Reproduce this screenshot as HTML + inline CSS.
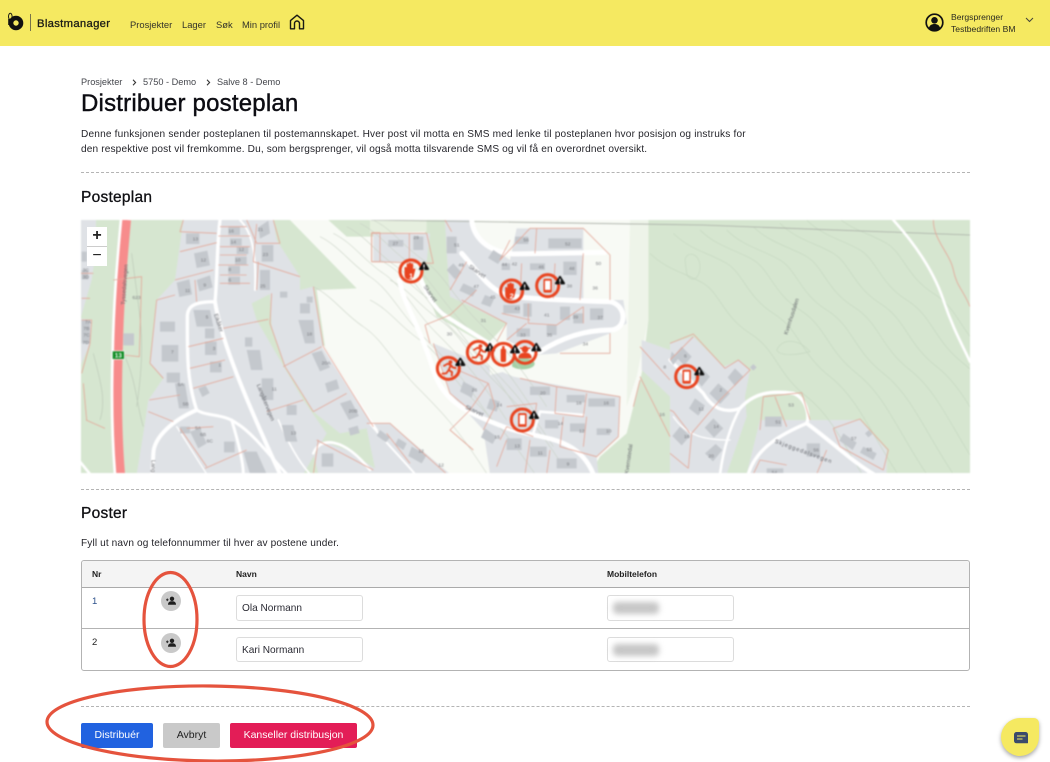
<!DOCTYPE html>
<html lang="no">
<head>
<meta charset="utf-8">
<title>Distribuer posteplan</title>
<style>
html,body{margin:0;padding:0;background:#fff}
body{width:1050px;height:762px;overflow:hidden;position:relative;font-family:"Liberation Sans",sans-serif;color:#1a1a1a}
.t{position:absolute;white-space:nowrap;line-height:1}
header{position:absolute;left:0;top:0;width:1050px;height:45.5px;background:#f5e961}
.nav{font-size:9.4px;top:19.5px;color:#33332a}
.bc{font-size:9.2px;top:78px;color:#44464c}
.dash{position:absolute;left:81px;width:889px;height:0;border-top:1px dashed #b4b4b4}
h1,h2{margin:0;font-weight:400}
h1{font-size:24px;left:81px;top:92px;color:#0c0c12;-webkit-text-stroke:.4px #0c0c12;letter-spacing:.2px}
h2{font-size:15.5px;color:#101014;-webkit-text-stroke:.3px #101014;letter-spacing:.25px}
.p{font-size:10.1px;left:81px;color:#24242a}
.tbl{position:absolute;left:81px;top:560px;width:887px;height:109px;border:1px solid #b3b3b3;border-radius:3px}
.th{position:absolute;left:0;top:0;width:887px;height:26px;background:#f4f4f4;border-bottom:1px solid #aaa;border-radius:3px 3px 0 0}
.rl{position:absolute;left:0;top:67px;width:887px;border-top:1px solid #b3b3b3}
.h{font-size:8.5px;font-weight:700;top:570px;color:#222}
.in{position:absolute;width:125px;box-sizing:content-box;border:1px solid #dcdcdc;border-radius:3px;background:#fff;font-size:10.1px;color:#2a2a33}
.in span{position:absolute;left:5px;top:8px;line-height:1}
.blob{position:absolute;left:5px;top:6px;width:46px;height:12px;background:#c6c6c6;filter:blur(3px);border-radius:4px}
.av{position:absolute;left:161px;width:20px;height:20px;border-radius:50%;background:#c9c9c9}
.btn{position:absolute;top:723px;height:25px;border-radius:2px;font-size:10.5px;line-height:24px;text-align:center;white-space:nowrap}
.chat{position:absolute;left:1001px;top:718px;width:38px;height:38px;background:#f5e961;border-radius:50% 5px 50% 50%;box-shadow:0 2px 4px rgba(0,0,0,.35)}
.map{position:absolute;left:81px;top:220px;width:889px;height:253px;filter:blur(.7px)}
.zc{position:absolute;left:87px;width:20px;height:19px;text-align:center;font-size:16px;line-height:18px;color:#222}
.over{position:absolute;left:0;top:0;pointer-events:none}
</style>
</head>
<body>
<header>
<svg style="position:absolute;left:7px;top:12px" width="18" height="20" viewBox="0 0 18 20">
<ellipse cx="3.300" cy="4.500" rx="1.800" ry="3.200" fill="none" stroke="#1a1a12" stroke-width="1"/>
<path d="M3 7v6" stroke="#111" stroke-width="3.600"/>
<circle cx="9" cy="11" r="5" fill="none" stroke="#111" stroke-width="4.600"/>
</svg>
<div style="position:absolute;left:30px;top:14px;width:1px;height:17px;background:#77734a"></div>
<div class="t" style="left:37px;top:18.5px;font-size:11.3px;color:#1c1c16;-webkit-text-stroke:.3px #1c1c16;letter-spacing:.3px">Blastmanager</div>
<div class="t nav" style="left:130px">Prosjekter</div>
<div class="t nav" style="left:182px">Lager</div>
<div class="t nav" style="left:216px">Søk</div>
<div class="t nav" style="left:242px">Min profil</div>
<svg style="position:absolute;left:289px;top:14px" width="16" height="16" viewBox="0 0 16 16"><path d="M1.5 14.8V6.6L8 1.2l6.5 5.4v8.2H10.500V9.500a2.500 2.500 0 0 0-5 0v5.300z" fill="none" stroke="#1a1a14" stroke-width="1.400" stroke-linejoin="round"/></svg>
<svg style="position:absolute;left:925px;top:13px" width="19" height="19" viewBox="0 0 19 19"><circle cx="9.500" cy="9.500" r="8.300" fill="none" stroke="#111" stroke-width="1.700"/><circle cx="9.500" cy="7.300" r="3.300" fill="#111"/><path d="M3.800 15c1-3 3-4 5.700-4s4.700 1 5.700 4a8 8 0 0 1-11.400 0z" fill="#111"/></svg>
<div class="t" style="left:951px;top:13px;font-size:8.600px;color:#2a2a20">Bergsprenger</div>
<div class="t" style="left:951px;top:24.500px;font-size:8.600px;color:#2a2a20">Testbedriften BM</div>
<svg style="position:absolute;left:1025px;top:17px" width="9" height="6" viewBox="0 0 9 6"><path d="M1 1l3.500 3.500L8 1" fill="none" stroke="#44443a" stroke-width="1"/></svg>
</header>

<div class="t bc" style="left:81px">Prosjekter</div>
<svg style="position:absolute;left:132px;top:79px" width="5" height="7" viewBox="0 0 5 7"><path d="M1 .8l2.600 2.700L1 6.200" fill="none" stroke="#333" stroke-width="1.100"/></svg>
<div class="t bc" style="left:143px">5750 - Demo</div>
<svg style="position:absolute;left:206px;top:79px" width="5" height="7" viewBox="0 0 5 7"><path d="M1 .8l2.600 2.700L1 6.200" fill="none" stroke="#333" stroke-width="1.100"/></svg>
<div class="t bc" style="left:217px">Salve 8 - Demo</div>

<h1 class="t">Distribuer posteplan</h1>
<div class="t p" style="top:130px;letter-spacing:.185px">Denne funksjonen sender posteplanen til postemannskapet. Hver post vil motta en SMS med lenke til posteplanen hvor posisjon og instruks for</div>
<div class="t p" style="top:145px;letter-spacing:.145px">den respektive post vil fremkomme. Du, som bergsprenger, vil også motta tilsvarende SMS og vil få en overordnet oversikt.</div>
<div class="dash" style="top:172px"></div>
<h2 class="t" style="left:81px;top:190px">Posteplan</h2>

<div class="map">
<svg width="889" height="253" viewBox="0 0 889 253" style="display:block">
<defs>
<g id="warn" transform="translate(0,3) scale(1.400)"><path d="M0-13c1.500 0 2 1 3 3l7 11c1.500 2.500.5 4-2 4H-8c-2.500 0-3.500-1.500-2-4l7-11c1-2 1.500-3 3-3z" fill="#0d0d0d"/><path d="M0-7V0" stroke="#fff" stroke-width="2.600"/><circle cy="3" r="1.300" fill="#fff"/></g>
<g id="ring"><circle r="33" fill="none" stroke="#e8431f" stroke-width="9"/></g>
<g id="hand" transform="scale(1.300)"><path d="M-15-7c0-3 5-3 5 0v-8c0-3 5-3 5 0v-2c0-3 5-3 5 0v2c0-3 5-3 5 0V-4c2-3 6-2 5 1l-3 12c-2 9-6 11-11 11s-11-3-11-12z" fill="#e8431f"/></g>
<g id="phone" transform="scale(1.150)"><rect x="-11" y="-18" width="22" height="36" rx="3" fill="#e8431f"/><rect x="-7" y="-13" width="14" height="24" fill="#fff"/></g>
<g id="run" transform="scale(1.250)"><circle cx="5" cy="-15" r="4.500" fill="#e8431f"/><path d="M-12-5L-2-11 6-8 1 4 9 9 8 19M1 4l-6 8-11 1M6-8l5 6 8 1" fill="none" stroke="#e8431f" stroke-width="4.500" stroke-linejoin="round"/></g>
<path id="cont" d="M0,0C60,30 90,80 150,120S240,230 310,300 430,420 520,560" fill="none" stroke="#c8d1c4" stroke-width="1.600"/>
<path id="cont2" d="M0,0C50,50 110,60 160,90S220,190 300,240 380,360 470,430 600,620 700,762" fill="none" stroke="#c4d6bf" stroke-width="1.800"/>
</defs>

<rect width="889" height="253" fill="#d6e6d0"/>

<!-- open white terrain -->
<g transform="translate(289,0) scale(.33333)">
<polygon fill="#f8faf5" points="-240,0 835,0 835,300 815,460 770,640 690,710 660,762 240,762 60,660 30,640 -135,380 -160,210 -40,205"/>
<polygon fill="#d6e6d0" points="170,0 225,0 240,190 410,310 350,375 200,290 150,170"/>
<polygon fill="#d6e6d0" points="-125,0 -70,50 30,50 170,15 170,0"/>
<polygon fill="#e6efdf" points="0,0 170,0 170,35 0,40"/>
<polygon fill="#eef4e9" points="780,0 835,0 835,300 800,470 770,560"/>
</g>

<!-- residential grey -->
<g fill="#dfe2e6">
<g transform="translate(-1,0) scale(.33333)">
<polygon points="0,0 48,0 48,90 35,180 0,300"/>
<polygon points="0,295 35,300 30,370 0,440"/>
<polygon points="310,0 580,0 590,60 660,170 660,210 700,200 730,380 900,640 900,762 170,762 190,640 205,540 250,475 210,430 230,240 285,180"/>
</g>
<g transform="translate(289,0) scale(.33333)">
<polygon points="225,0 300,0 330,60 420,120 440,25 640,25 640,240 760,240 770,310 720,340 560,400 500,405 410,360 410,310 240,230 230,100"/>
<polygon points="10,40 180,40 170,125 10,125"/>
<polygon points="190,370 360,440 430,470 750,530 745,650 680,710 685,762 360,762 340,630 240,520"/>
<polygon points="-10,610 60,610 240,762 -10,762"/>
<polygon points="815,360 900,390 900,530 815,450"/>
</g>
<g transform="translate(589,0) scale(.33333)">
<polygon points="0,370 70,350 160,440 210,420 240,450 225,530 230,590 170,762 0,762"/>
<polygon points="270,600 570,600 650,690 650,762 230,762"/>
</g>
</g>
<g transform="translate(-1,0) scale(.33333)">
<polygon fill="#d6e6d0" points="515,250 570,222 575,320 615,440 700,575 780,640 860,625 885,745 800,690 730,665 700,700 715,762 670,762 740,640 670,540 530,300"/>
</g>
<g transform="translate(289,0) scale(.33333)"><ellipse cx="458" cy="431" rx="36" ry="17" fill="#a4d0a5"/><path d="M355,400L430,395 425,450 360,465z" fill="#f8faf5"/></g>

<!-- contours -->
<g transform="translate(-1,0) scale(.33333)">
<use href="#cont" x="720" y="50"/><use href="#cont" x="760" y="40"/><use href="#cont" x="800" y="20"/><use href="#cont" x="840" y="10"/><use href="#cont" x="880" y="0"/>
<use href="#cont" x="900" y="120"/><use href="#cont" x="930" y="180"/><use href="#cont" x="870" y="240"/><use href="#cont" x="700" y="200"/>
<path d="M130,400C170,480 170,560 190,620M40,400C60,480 80,540 60,600M155,100C180,300 200,360 170,560" fill="none" stroke="#bcc9b8" stroke-width="2"/>
</g>
<g transform="translate(589,0) scale(.33333)">
<use href="#cont2" x="90" y="30"/><use href="#cont2" x="170" y="30"/><use href="#cont2" x="250" y="20"/><use href="#cont2" x="330" y="10"/><use href="#cont2" x="410" y="0"/><use href="#cont2" x="10" y="40"/><use href="#cont2" x="490" y="-20"/><use href="#cont2" x="-60" y="100"/>
<path d="M45,120C50,90 90,100 90,140S60,190 50,160zM320,390C340,350 390,360 420,395 380,405 330,410 320,390z" fill="none" stroke="#c4d6bf" stroke-width="1.800"/>
</g>
<path d="M290,0L620,5 889,15" fill="none" stroke="#a9aea6" stroke-width=".8"/>

<!-- roads -->
<g fill="none" stroke-linecap="round" stroke-linejoin="round" stroke="#fff">
<g transform="translate(-1,0) scale(.33333)">
<path d="M135,0C123,130 113,250 110,400C107,500 107,640 117,762" stroke-width="32"/>
<path d="M140,0C128,130 118,250 115,400C112,500 112,640 122,762" stroke="#f78c8c" stroke-width="26" stroke-linecap="butt"/>
<path d="M420,0C410,80 412,180 405,245C350,245 322,255 322,290C322,400 320,480 350,570" stroke-width="10"/>
<path d="M405,245C420,340 470,480 600,762" stroke-width="12"/>
<path d="M480,0C510,30 530,80 525,210" stroke-width="6"/>
<path d="M350,570C380,590 430,580 470,610C520,640 580,720 620,762" stroke-width="9"/>
<path d="M350,570C280,600 222,650 220,700L217,762" stroke-width="12"/>
<path d="M290,620C310,650 340,700 380,762" stroke-width="4"/>
<path d="M455,600C470,650 490,720 490,762" stroke-width="9"/>
<path d="M730,380L890,630" stroke-width="7"/>
<path d="M700,700C720,650 790,650 870,750" stroke-width="8"/>
<path d="M595,600C630,680 660,730 690,762" stroke-width="5"/>
<path d="M0,725L30,762" stroke-width="8"/>
</g>
<g transform="translate(289,0) scale(.33333)">
<path d="M305,0C310,50 350,95 430,102L705,97" stroke-width="15"/>
<path d="M275,100C320,150 350,200 400,222C430,235 560,240 720,245C772,255 772,330 720,330C650,330 580,350 510,395L430,400" stroke-width="15"/>
<path d="M150,170C170,220 190,265 230,290L360,372 490,395" stroke-width="12"/>
<path d="M88,180C100,250 150,320 190,450C220,550 300,580 400,620C500,660 620,640 670,762" stroke-width="14"/>
<path d="M490,640L510,575 640,585" stroke-width="8"/>
<path d="M0,610C40,660 100,720 135,762" stroke-width="6"/>
</g>
<g transform="translate(589,0) scale(.33333)">
<path d="M670,0C760,100 800,180 820,240C850,330 880,380 900,425" stroke-width="8"/>
<path d="M0,420L100,520C130,570 170,580 210,565C250,520 300,510 370,520C410,535 420,590 410,610C340,640 260,680 235,762" stroke-width="10"/>
<path d="M410,610C480,660 540,720 610,762" stroke-width="12"/>
<path d="M210,565C180,620 160,690 150,762" stroke-width="8"/>
<path d="M10,590C50,650 110,660 180,660" stroke-width="4"/>
</g>
</g>

<!-- buildings -->
<g fill="#c4c8cd">
<g transform="translate(-1,0) scale(.33333)">
<path d="M318,40h40v32h-40zM342,100l40-8 8,44-40 8zM290,188l38-10 8,45-38 8zM350,180l40-14 8,36-40 12zM445,20h35v25h-35zM450,55h35v22h-35zM470,80h35v22h-35zM465,110h35v24h-35zM445,138h35v24h-35zM445,170h35v24h-35zM535,22l30-20 5,38-30 16zM545,75h35v50h-35zM540,150h30v60h-30zM240,305h45v30h-45zM340,270h50l10,50h-50zM375,325h28v30h-28zM245,375h50v50h-50zM375,365h35v40h-35zM390,425h35v32h-35zM260,458h40v30h-40zM285,490h30l12,75h-30zM355,505l22-8 12,22-22 12zM500,390h40l8,60h-35zM495,352h22v28h-22zM545,475h35v65h-35zM620,555h30v30h-30zM605,615h35l12,50h-35zM432,665h32v32h-32zM490,695h40l30,67h-50zM660,250h30v30h-30zM655,300h45l5,70h-30zM695,400l30-8 25,50-30 12zM735,490l35-12 8,28-35 12zM780,550l32-10 25,48-30 12zM805,625l28-8 6,22-28 8zM725,700h35v40h-35zM600,215h22v18h-22zM680,230h18v18h-18zM130,340h32v36h-32zM5,95h15v30H5zM5,150h20v28H5zM5,300h25v70H5z"/>
<path d="M300,620h30v20h-30zM330,635l30-10 20,45-25 15z"/>
</g>
<g transform="translate(289,0) scale(.33333)">
<path d="M55,60h45v20H55zM130,50h30v40h-30zM230,50h30v50h-30zM250,130l25,28-20 20-25-28zM280,190l40 18-12 22-40-18zM345,225l28 10-12 26-28-10zM370,90l30 20-16 22-30-18zM395,130h25v20h-25zM435,50h40v22h-40zM535,55h100v30H535zM480,130h45v20h-45zM580,125h40v40h-40zM520,190h25v22h-25zM400,255h50v25h-50zM460,250h25v40h-25zM570,260h30v40h-30zM610,280h30v30h-30zM660,265h40v35h-40zM440,325h40v25h-40zM530,315h30v30h-30zM280,485l35 18-10 30-35-18zM360,535l30 10-10 30-30-10zM480,500h60v25h-60zM590,525h55v22h-55zM655,535h80v25h-80zM525,600h40v25h-40zM600,610h45v25h-45zM680,625h40v20h-40zM345,625l35 25-12 22-35-20zM410,655h45v35h-45zM480,680h50v30h-50zM560,715h60v30h-60zM30,630l30 22-12 15-28-20zM85,655l25 15-10 20-25-16zM125,680l45 25-15 25-40-22z"/>
</g>
<g transform="translate(589,0) scale(.33333)">
<path d="M35,380l30 30-22 26-30-30zM5,395l20 20-15 20-10-15zM95,445l25 25-25 30-22-28zM195,445l25 25-25 28-22-26zM250,432l10 10-10 10-10-10zM145,490l35 30-30 32-32-32zM75,535l30 22-20 30-28-22zM130,595l30 30-28 28-28-30zM30,620l30 28-25 28-28-28zM105,700l32-28 20 18-28 34zM285,590h50v30h-50zM410,670h40v40h-40zM520,640l40 28-12 22-40-28zM580,680l40 20-10 20-40-22zM585,640l12-10 10 12-12 10zM290,745h50v17h-50z"/>
</g>
</g>

<!-- parcels -->
<g fill="none" stroke="#e3a899" stroke-width="2.500" stroke-linejoin="round">
<g transform="translate(-1,0) scale(.33333)">
<path d="M310,0L300,35 410,40M300,95L410,68M285,180L400,150M230,240L285,225M350,245L345,180M420,20h80M415,48h95M420,80h90M420,105h80M415,135h90M420,165h80M420,190h90M530,12L520,125 660,170M535,125L530,210M500,0L530,70 600,70 580,0M210,430L230,240M325,380L430,355M330,445L435,420M340,505L460,470M208,540L300,525M205,575L280,605M430,325L565,298M575,220L570,310 615,440 700,575M610,440L725,380M700,200L730,380 880,620M700,575L800,520M560,575L670,540M210,430L250,475M375,745L500,690M300,625L380,740M320,625L400,620M710,660L880,750M715,660L700,762M875,38H900V125H875zM0,160H40M5,235H30M5,300L35,300 30,370 5,460M18,600L75,625M100,180L185,170 178,410 130,405M10,490L20,600"/>
</g>
<g transform="translate(289,0) scale(.33333)">
<path d="M5,40H170L190,130 5,125zM118,40V125M245,35L225,0M240,210L290,125M320,210L240,285 165,315M275,240L410,310 380,365M165,315L180,370M420,60L390,120 480,25 640,25 720,105 720,240M500,25L495,100M640,100L630,240M455,130L450,235M555,130L550,235M395,280L480,300M475,250L475,310 560,315 640,260M640,260L640,310M570,400L720,400 720,340M470,310L410,360M190,370L240,520 300,570 240,630 310,690M240,440L355,490 300,570M355,490L375,560 340,630M450,475L560,500 555,580 640,590 650,520M560,500L750,530 745,650 680,710 570,680 580,590M410,560L500,550 490,620M390,660L410,620 490,650M380,740L410,660M480,660L465,762M540,690L530,762M650,590L640,680M-10,610L60,610 230,762M50,640L120,730M810,380L900,480M810,470L900,650M810,480L790,560"/>
</g>
<g transform="translate(589,0) scale(.33333)">
<path d="M0,370L70,342 165,445 205,420 240,450 150,540 65,640 55,745M0,570L10,575 60,640M70,350L0,420M280,530L395,518 420,600M280,530L270,630M315,530L350,620M490,625L570,597 655,690 640,750M490,625L510,680 640,750M470,690L440,762M270,720L350,735M0,700L55,745M790,0C790,60 840,100 850,150S880,210 900,260M250,762L270,720"/>
</g>
</g>

<!-- labels -->
<g fill="#7a7c80" font-family="Liberation Sans,sans-serif" font-size="15">
<g transform="translate(-1,0) scale(.33333)">
<text x="338" y="62">13</text><text x="362" y="125">12</text><text x="445" y="38">16</text><text x="452" y="70">14</text><text x="476" y="93">12</text><text x="465" y="125">10</text><text x="445" y="153">8</text><text x="445" y="185">6</text><text x="533" y="33">21</text><text x="548" y="108">23</text><text x="540" y="202">25</text><text x="315" y="216">11</text><text x="370" y="200">9</text><text x="157" y="237">623</text><text x="377" y="296">5</text><text x="273" y="400">7</text><text x="398" y="390">3</text><text x="415" y="440">1</text><text x="293" y="498">5A</text><text x="308" y="556">5B</text><text x="345" y="628">5A</text><text x="360" y="648">6B</text><text x="380" y="668">6C</text><text x="575" y="512">11</text><text x="632" y="644">13</text><text x="680" y="346">18</text><text x="725" y="433">20A</text><text x="806" y="577">20B</text><text x="8" y="175">3D</text><text x="8" y="155">3C</text><text x="15" y="310">7A</text><text x="10" y="330">7B</text><text x="10" y="350">7C</text><text x="8" y="372">7D</text>
<g font-size="17" fill="#62646a">
<text transform="translate(135,255) rotate(-86)">Tyssedalsvegen</text>
<text transform="translate(402,283) rotate(72)">Eikåker</text>
<text transform="translate(530,495) rotate(68)">Langåkervegen</text>
<text transform="translate(214,720) rotate(90)">Lang</text>
</g>
</g>
<g transform="translate(289,0) scale(.33333)">
<text x="68" y="75">27</text><text x="130" y="57">29</text><text x="252" y="80">51</text><text x="265" y="140">49</text><text x="310" y="204">47</text><text x="395" y="138">44</text><text x="425" y="137">42</text><text x="460" y="65">56</text><text x="585" y="77">52</text><text x="505" y="145">46</text><text x="597" y="150">48</text><text x="590" y="202">38</text><text x="677" y="135">50</text><text x="667" y="208">36</text><text x="360" y="235">45</text><text x="433" y="270">43</text><text x="522" y="290">41</text><text x="608" y="295">39</text><text x="682" y="297">37</text><text x="332" y="306">31</text><text x="230" y="347">30</text><text x="450" y="350">33</text><text x="530" y="350">35</text><text x="638" y="376">34</text><text x="305" y="515">26</text><text x="380" y="560">24</text><text x="510" y="524">20</text><text x="618" y="553">18</text><text x="700" y="553">16</text><text x="563" y="615">14</text><text x="627" y="638">12</text><text x="708" y="638">10</text><text x="373" y="655">15</text><text x="433" y="683">13</text><text x="503" y="703">11</text><text x="590" y="736">9</text><text x="145" y="697">12</text><text x="205" y="740">12</text><text x="880" y="445">8</text><text x="868" y="588">16</text>
<g font-size="17" fill="#62646a">
<text transform="translate(295,142) rotate(35)">Skarvet</text>
<text transform="translate(160,200) rotate(55)">Skarvet</text>
<text transform="translate(285,565) rotate(25)">Skarvet</text>
<text transform="translate(775,762) rotate(-82)">Kvernstedal</text>
</g>
</g>
<g transform="translate(589,0) scale(.33333)">
<text x="42" y="412">6</text><text x="148" y="514">2</text><text x="85" y="572">12</text><text x="130" y="624">14</text><text x="42" y="654">16</text><text x="115" y="712">20</text><text x="355" y="560">53</text><text x="316" y="610">51</text><text x="430" y="695">56</text><text x="543" y="660">57</text><text x="590" y="693">55</text><text x="305" y="762">54</text>
<g font-size="17" fill="#62646a">
<text transform="translate(352,345) rotate(-72)">Kvernhusdalen</text>
<text transform="translate(313,668) rotate(20)" textLength="180">Skjeggedalsvegen</text>
</g>
</g>
</g>
<g transform="translate(-1,0) scale(.33333)">
<rect x="97" y="393" width="36" height="25" fill="#0b8a1f" stroke="#fff" stroke-width="2"/>
<text x="115" y="412" font-family="Liberation Sans,sans-serif" font-size="19" font-weight="700" fill="#fff" text-anchor="middle">13</text>
</g>

<!-- markers -->
<g transform="translate(289,0) scale(.33333)" font-family="Liberation Sans,sans-serif">
<g transform="translate(123,153)"><use href="#ring"/><use href="#hand"/><text y="22" text-anchor="middle" font-size="22" font-weight="700" fill="#fff">1</text></g>
<use href="#warn" x="162" y="140"/>
<g transform="translate(425,213)"><use href="#ring"/><use href="#hand"/><text y="22" text-anchor="middle" font-size="22" font-weight="700" fill="#fff">2</text></g>
<use href="#warn" x="464" y="200"/>
<g transform="translate(533,197)"><use href="#ring"/><use href="#phone"/></g>
<use href="#warn" x="570" y="183"/>
<g transform="translate(325,397)"><use href="#ring"/><use href="#run"/></g>
<use href="#warn" x="360" y="384"/>
<g transform="translate(465,397)"><use href="#ring"/><circle cy="-9" r="10" fill="#e8431f"/><path d="M-17-14h34l-3 4H-14z" fill="#e8431f"/><path d="M-20 18c0-13 9-17 20-17s20 4 20 17z" fill="#e8431f"/></g>
<use href="#warn" x="499" y="384"/>
<g transform="translate(400,403)"><use href="#ring"/><rect x="-8" y="-17" width="16" height="40" rx="5" fill="#e8431f"/><rect x="-3.500" y="-25" width="7" height="9" fill="#e8431f"/></g>
<use href="#warn" x="435" y="390"/>
<g transform="translate(235,445)"><use href="#ring"/><use href="#run"/></g>
<use href="#warn" x="271" y="428"/>
<g transform="translate(457,600)"><use href="#ring"/><use href="#phone"/></g>
<use href="#warn" x="492" y="587"/>
</g>
<g transform="translate(589,0) scale(.33333)">
<g transform="translate(50,470)"><use href="#ring"/><use href="#phone"/></g>
<use href="#warn" x="88" y="456"/>
</g>
</svg>
</div>
<div style="position:absolute;left:87px;top:227px;width:20px;height:39px;background:#fff"></div>
<div class="zc" style="top:227px;font-weight:700">+</div>
<div style="position:absolute;left:87px;top:246px;width:20px;border-top:1px solid #ccc"></div>
<div class="zc" style="top:247px">−</div>

<div class="dash" style="top:489px"></div>
<h2 class="t" style="left:81px;top:506px">Poster</h2>
<div class="t" style="left:81px;top:538.500px;font-size:10.100px;letter-spacing:.12px;color:#24242a">Fyll ut navn og telefonnummer til hver av postene under.</div>

<div class="tbl"><div class="th"></div><div class="rl"></div></div>
<div class="t h" style="left:92px">Nr</div>
<div class="t h" style="left:236px">Navn</div>
<div class="t h" style="left:607px">Mobiltelefon</div>
<div class="t" style="left:92px;top:597px;font-size:9.500px;color:#2b4f8a">1</div>
<div class="t" style="left:92px;top:638px;font-size:9.500px;color:#222">2</div>

<div class="av" style="top:591px"><svg width="20" height="20" viewBox="0 0 20 20"><circle cx="11" cy="7.800" r="2.200" fill="#1f1f1f"/><path d="M7 13.800c0-2.700 1.600-3.600 4-3.600s4 .9 4 3.600z" fill="#1f1f1f"/><path d="M5 8.800h2.600M6.300 7.500v2.600" stroke="#1f1f1f" stroke-width=".9"/></svg></div>
<div class="av" style="top:633px"><svg width="20" height="20" viewBox="0 0 20 20"><circle cx="11" cy="7.800" r="2.200" fill="#1f1f1f"/><path d="M7 13.800c0-2.700 1.600-3.600 4-3.600s4 .9 4 3.600z" fill="#1f1f1f"/><path d="M5 8.800h2.600M6.300 7.500v2.600" stroke="#1f1f1f" stroke-width=".9"/></svg></div>

<div class="in" style="left:236px;top:595px;height:24px"><span>Ola Normann</span></div>
<div class="in" style="left:236px;top:637px;height:23px"><span>Kari Normann</span></div>
<div class="in" style="left:607px;top:595px;height:24px"><div class="blob"></div></div>
<div class="in" style="left:607px;top:637px;height:23px"><div class="blob"></div></div>

<div class="dash" style="top:706px"></div>
<div class="btn" style="left:81px;width:72px;background:#2162e0;color:#fff">Distribuér</div>
<div class="btn" style="left:163px;width:57px;background:#c9c9c9;color:#222">Avbryt</div>
<div class="btn" style="left:230px;width:127px;background:#e31d57;color:#fff">Kanseller distribusjon</div>

<svg class="over" width="1050" height="762" viewBox="0 0 1050 762">
<ellipse cx="170.500" cy="619.500" rx="26.500" ry="47" fill="none" stroke="#e5533d" stroke-width="3.200"/>
<ellipse cx="210" cy="723.500" rx="163" ry="37.500" fill="none" stroke="#e5533d" stroke-width="3.200" transform="rotate(.6 210 723)"/>
</svg>

<div class="chat"><svg width="38" height="38" viewBox="0 0 38 38"><path d="M15.500 14h9a2.500 2.500 0 0 1 2.500 2.500v8c0 .5 0 .8-.5.8H15.500a2.500 2.500 0 0 1-2.500-2.500v-6.300a2.500 2.500 0 0 1 2.500-2.500z" fill="#3b4a6b"/><path d="M16 18h8.500M16 21h5.500" stroke="#f5e961" stroke-width="1.100"/></svg></div>
</body>
</html>
